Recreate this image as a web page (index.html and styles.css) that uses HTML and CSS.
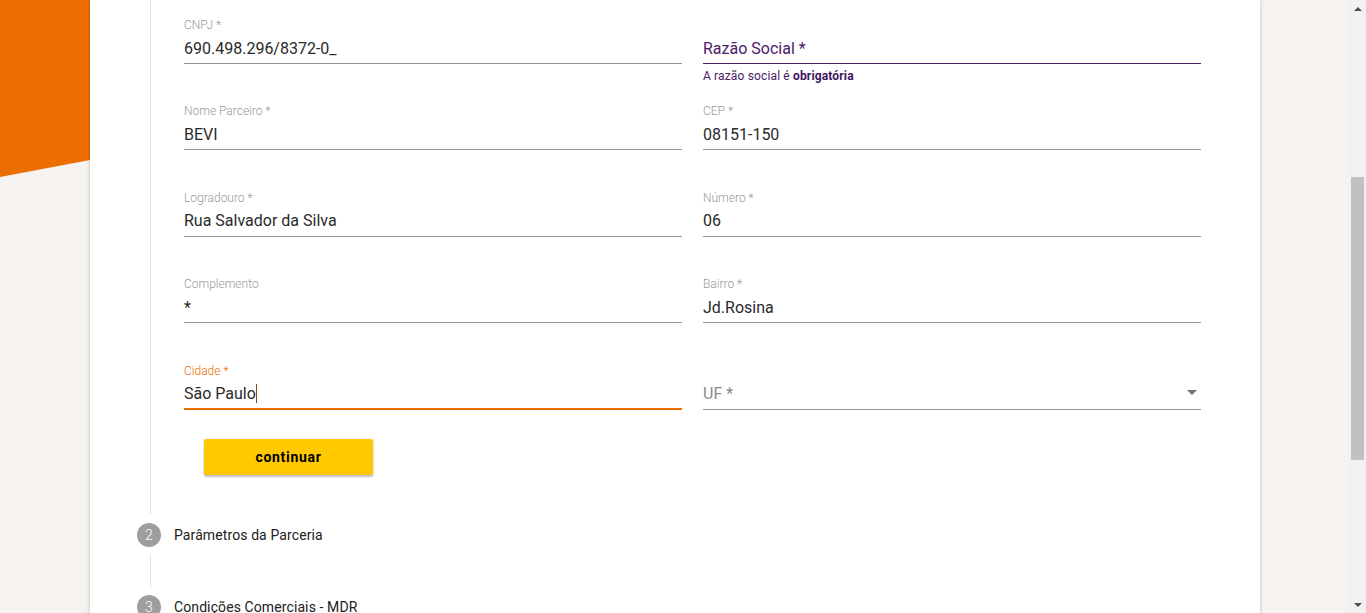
FILE: index.html
```html
<!DOCTYPE html>
<html lang="pt-BR">
<head>
<meta charset="utf-8">
<title>Cadastro de Parceiro</title>
<link rel="stylesheet" href="styles.css">
</head>
<body>
<div class="viewport">
  <div class="page">
    <div class="bg-shape"></div>
    <div class="card">
      <div class="step-content">
        <div class="form">
          <div class="field">
            <div class="label">CNPJ *</div>
            <div class="value">690.498.296/8372-0_</div>
          </div>
          <div class="field field-invalid">
            <div class="label"></div>
            <div class="value placeholder">Razão Social *</div>
            <div class="error">A razão social é <strong>obrigatória</strong></div>
          </div>
          <div class="field">
            <div class="label">Nome Parceiro *</div>
            <div class="value">BEVI</div>
          </div>
          <div class="field">
            <div class="label">CEP *</div>
            <div class="value">08151-150</div>
          </div>
          <div class="field">
            <div class="label">Logradouro *</div>
            <div class="value">Rua Salvador da Silva</div>
          </div>
          <div class="field">
            <div class="label">Número *</div>
            <div class="value">06</div>
          </div>
          <div class="field">
            <div class="label">Complemento</div>
            <div class="value">*</div>
          </div>
          <div class="field">
            <div class="label">Bairro *</div>
            <div class="value">Jd.Rosina</div>
          </div>
          <div class="field field-focused">
            <div class="label">Cidade *</div>
            <div class="value">São Paulo<span class="caret"></span></div>
          </div>
          <div class="field">
            <div class="label"></div>
            <div class="value select"><span class="placeholder-grey">UF *</span><span class="arrow"></span></div>
          </div>
        </div>
        <div class="actions">
          <button class="btn" type="button">continuar</button>
        </div>
      </div>
      <div class="step-header">
        <span class="step-num">2</span>
        <span class="step-title">Parâmetros da Parceria</span>
      </div>
      <div class="connector"></div>
      <div class="step-header step-header-next">
        <span class="step-num">3</span>
        <span class="step-title">Condições Comerciais - MDR</span>
      </div>
    </div>
  </div>
  <div class="scrollbar">
    <div class="sb-up"></div>
    <div class="sb-track"><div class="sb-thumb"></div></div>
    <div class="sb-down"></div>
  </div>
</div>
</body>
</html>
```
FILE: styles.css
```css
html, body {
  margin: 0;
  padding: 0;
  height: 613px;
  overflow: hidden;
}
body {
  font-family: Roboto, "Liberation Sans", Arial, sans-serif;
  color: rgba(0, 0, 0, 0.87);
}
.viewport {
  display: flex;
  height: 613px;
}
.page {
  flex: 1;
  position: relative;
  background: #f5f2ef;
  overflow: hidden;
}
.bg-shape {
  position: absolute;
  left: 0;
  top: 0;
  width: 200px;
  height: 200px;
  background: #ec6e00;
  clip-path: polygon(0 0, 100% 0, 100% 139.2px, 0 177px);
}
.card {
  position: relative;
  margin-left: 90px;
  width: 1170px;
  height: 640px;
  background: #fff;
  box-shadow: 0 0 4px rgba(0, 0, 0, 0.22);
}
.step-content {
  margin-left: 60px;
  border-left: 1px solid #e0e0e0;
  padding-left: 33px;
  padding-right: 59px;
}
.form {
  display: grid;
  grid-template-columns: 498px 498px;
  column-gap: 21px;
  grid-auto-rows: 86.4px;
}
.field {
  padding-top: 18px;
  box-sizing: border-box;
}
.label {
  font-size: 12px;
  line-height: 14px;
  height: 14px;
  color: #999;
  font-weight: 300;
}
.value {
  margin-top: 6.5px;
  font-size: 16px;
  line-height: 20px;
  height: 20px;
  padding-bottom: 4.5px;
  border-bottom: 1px solid #949494;
  color: #2a2a2a;
  white-space: nowrap;
}
.field-invalid .value {
  border-bottom-color: #4b2069;
}
.placeholder {
  color: #4b2069;
}
.error {
  margin-top: 5.4px;
  font-size: 12px;
  line-height: 14px;
  color: #4b2069;
  letter-spacing: 0.15px;
}
.error strong {
  color: #3d1660;
  font-weight: 700;
}
.field-focused .label {
  color: #ec6e00;
}
.field-focused .value {
  padding-bottom: 3.5px;
  border-bottom: 2px solid #ec6e00;
}
.caret {
  display: inline-block;
  width: 1px;
  height: 19px;
  background: #8a4a10;
  vertical-align: -4px;
}
.select {
  display: flex;
  align-items: center;
  justify-content: space-between;
}
.placeholder-grey {
  color: #8a8a8a;
}
.arrow {
  width: 0;
  height: 0;
  border-left: 5px solid transparent;
  border-right: 5px solid transparent;
  border-top: 5px solid #757575;
  margin-right: 4px;
  margin-top: -3px;
}
.actions {
  padding: 7px 0 39px 20px;
}
.btn {
  display: block;
  width: 169px;
  height: 36px;
  border: none;
  border-radius: 2px;
  background: #ffc800;
  color: #000;
  font-family: Roboto, "Liberation Sans", Arial, sans-serif;
  font-size: 14px;
  font-weight: 700;
  letter-spacing: 0.7px;
  box-shadow: 0 2px 2px rgba(0, 0, 0, 0.24), 0 0 2px rgba(0, 0, 0, 0.12);
  padding: 0;
}
.step-header {
  display: flex;
  align-items: center;
  padding: 9px 0 8px 47px;
}
.step-header-next {
  padding-top: 8px;
}
.step-num {
  width: 24px;
  height: 24px;
  border-radius: 50%;
  background: #9e9e9e;
  color: #fff;
  font-size: 14px;
  display: flex;
  align-items: center;
  justify-content: center;
  font-weight: 300;
}
.step-title {
  margin-left: 13px;
  font-size: 14px;
  color: #212121;
  letter-spacing: 0.1px;
}
.connector {
  margin-left: 60px;
  border-left: 1px solid #e0e0e0;
  height: 32px;
}
.scrollbar {
  width: 17px;
  background: #f1f1f1;
  display: flex;
  flex-direction: column;
  align-items: center;
}
.sb-up, .sb-down {
  height: 17px;
  width: 17px;
  display: flex;
  align-items: center;
  justify-content: center;
}
.sb-up::after {
  content: "";
  border-left: 4px solid transparent;
  border-right: 4px solid transparent;
  border-bottom: 4px solid #505050;
}
.sb-down::after {
  content: "";
  border-left: 4px solid transparent;
  border-right: 4px solid transparent;
  border-top: 4px solid #505050;
}
.sb-track {
  flex: 1;
  width: 17px;
  padding-top: 160px;
  box-sizing: border-box;
}
.sb-thumb {
  margin-left: 2px;
  width: 13px;
  height: 283px;
  background: #c1c1c1;
}
```
